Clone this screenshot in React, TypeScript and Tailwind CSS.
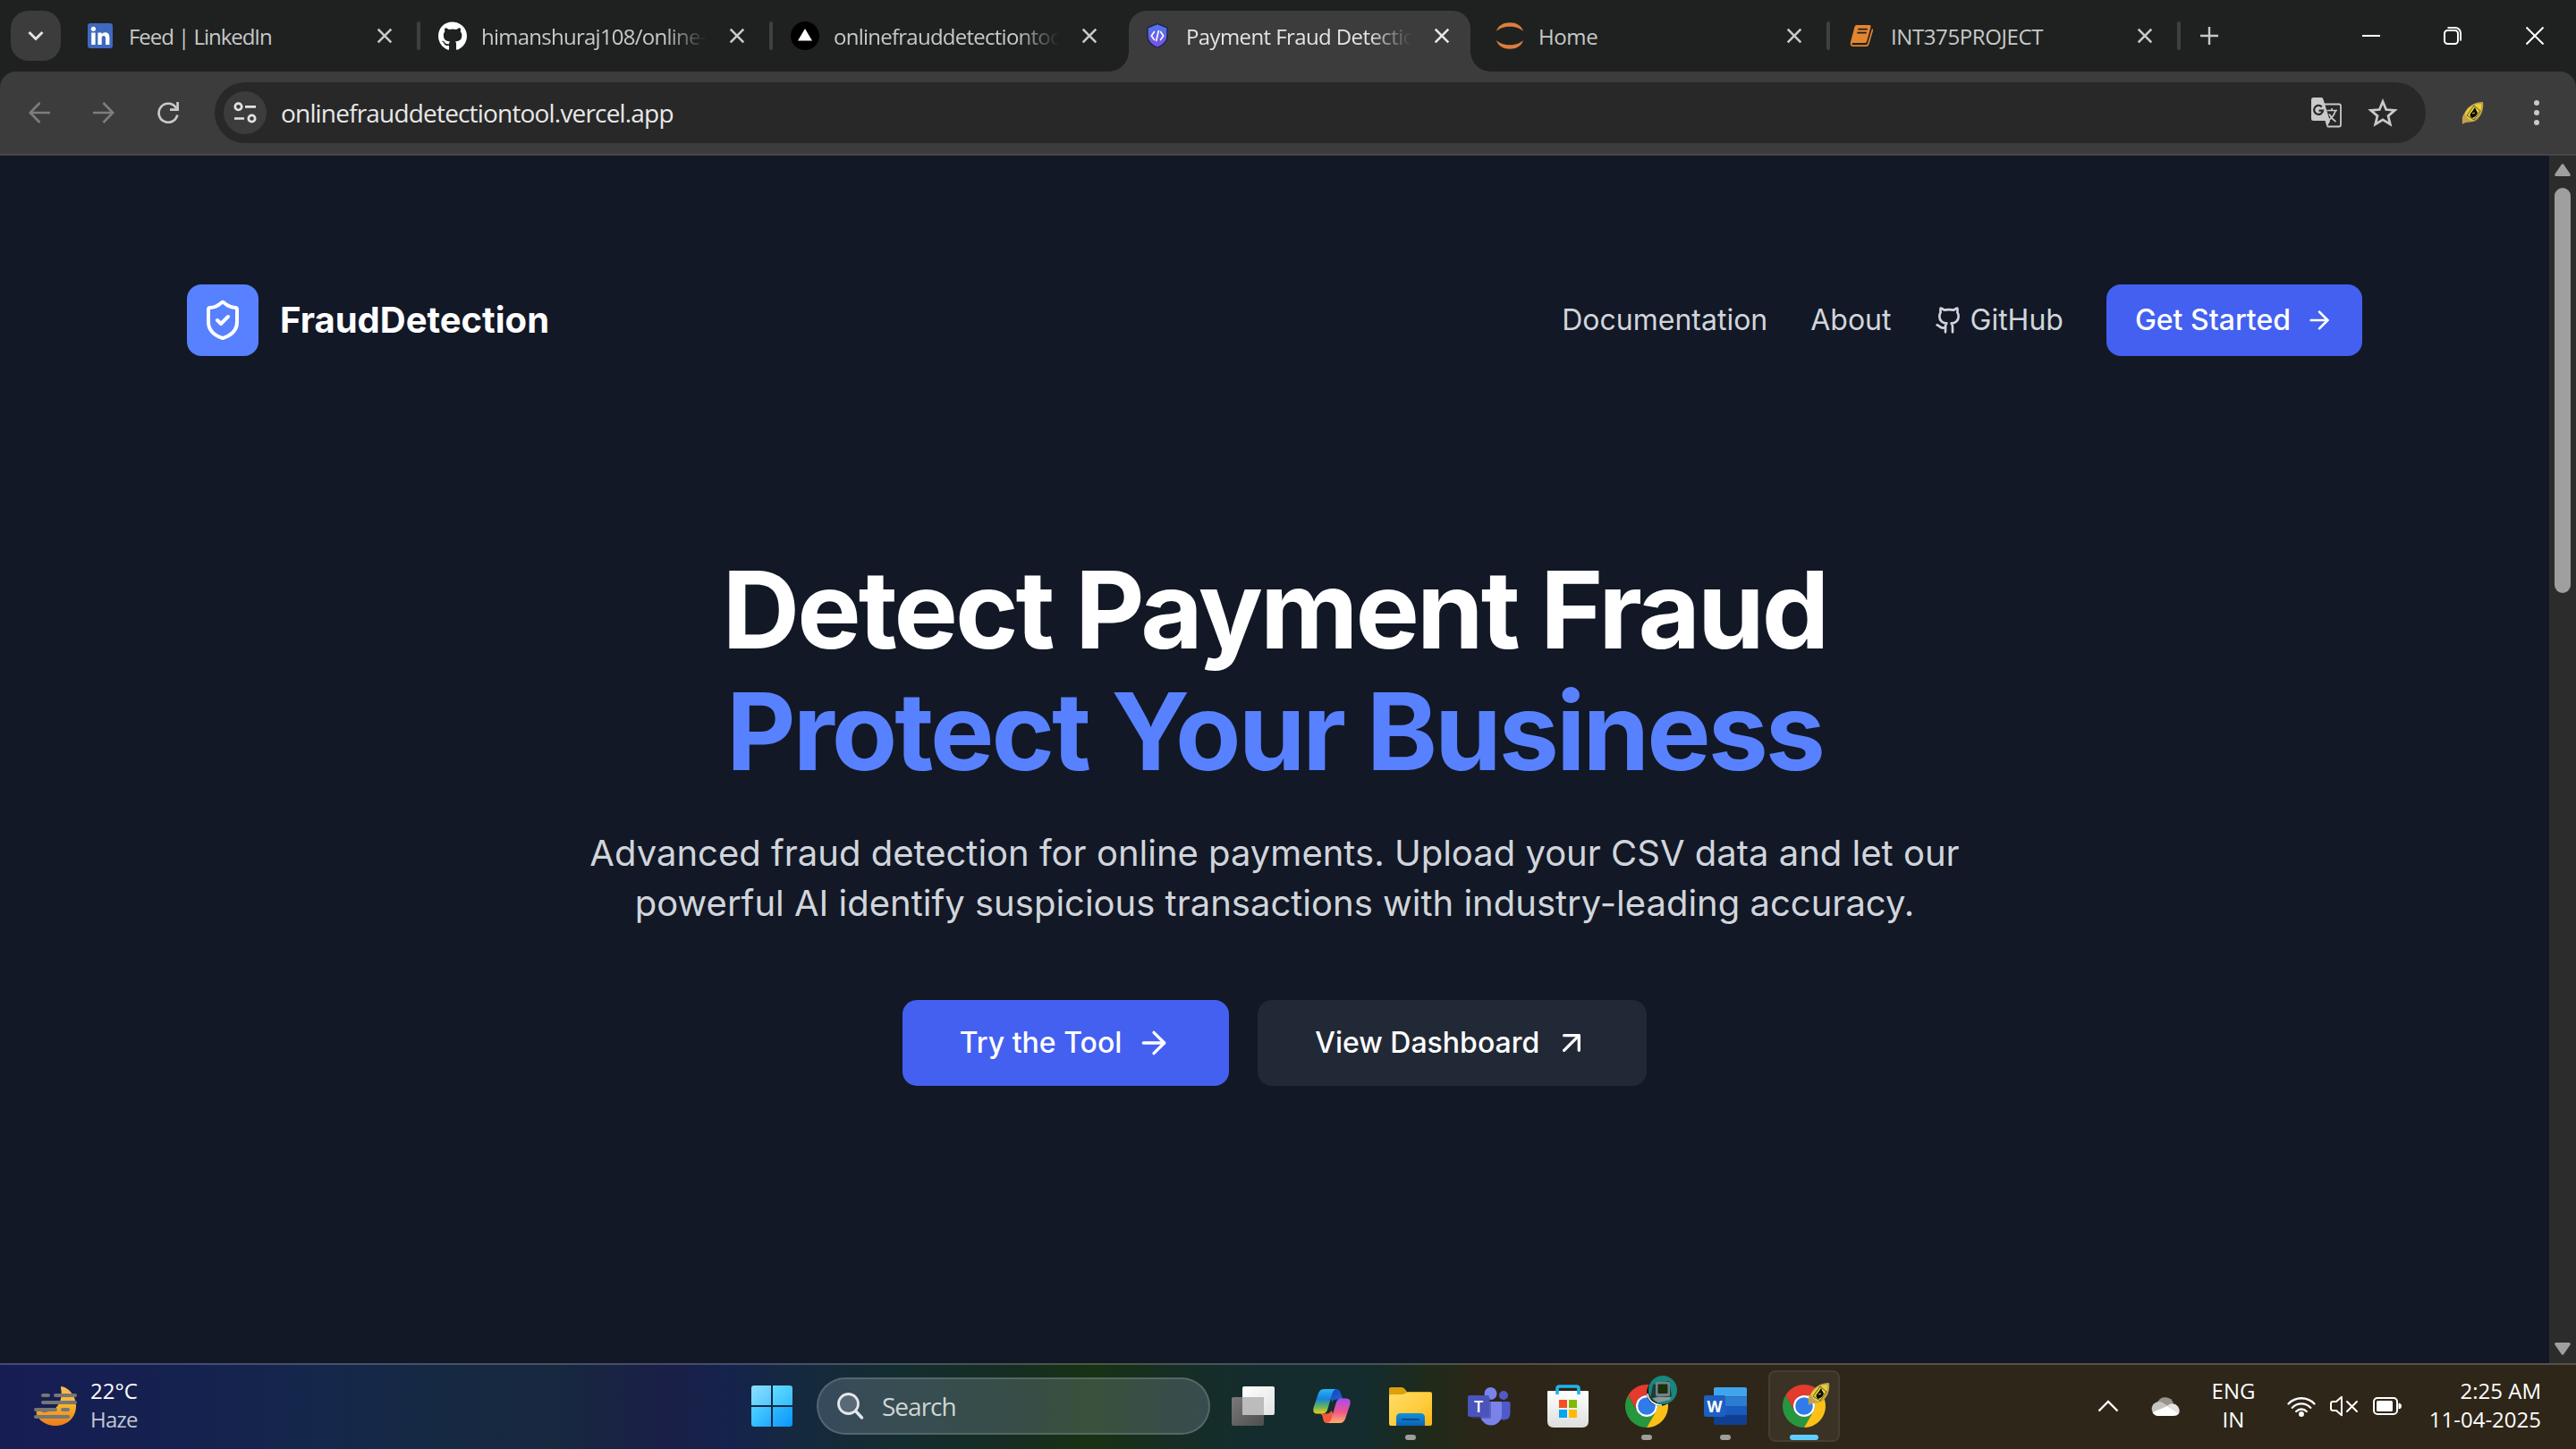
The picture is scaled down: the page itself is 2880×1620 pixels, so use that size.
import React from "react";
import { ArrowRight, ArrowUpRight, Github, ShieldCheck } from "lucide-react";
import { FaGithub } from "react-icons/fa";

/* ---------- favicons ---------- */

function LinkedInIcon() {
  return (
    <span className="flex h-7 w-7 items-end justify-center rounded-[3px] bg-[#3f69be]">
      <svg viewBox="0 0 28 28" className="h-7 w-7" fill="#fff">
        <circle cx="6.4" cy="6.3" r="2.6" />
        <path d="M4.2 10.6h4.4V24H4.2zM11.4 10.6h4.2v1.9c.8-1.4 2.3-2.2 4.1-2.2 3.5 0 4.7 2.2 4.7 5.8V24H20v-7.1c0-1.9-.6-2.9-2-2.9-1.600 0-2.300 1.100-2.300 3V24h-4.300z" />
      </svg>
    </span>
  );
}

function VercelIcon() {
  return (
    <svg viewBox="0 0 32 32" className="h-8 w-8">
      <circle cx="16" cy="16" r="16" fill="#000" />
      <path d="M16 8l8 13.500H8z" fill="#fff" />
    </svg>
  );
}

function ShieldCodeIcon() {
  return (
    <svg viewBox="0 0 32 32" className="h-8 w-8">
      <defs>
        <linearGradient id="shieldFill" x1="0" y1="0" x2="0" y2="1">
          <stop offset="0" stopColor="#4f78ee" />
          <stop offset="1" stopColor="#7c4fe6" />
        </linearGradient>
      </defs>
      <path d="M16 2.600L27 7v9.500c0 6-4.500 10.200-11 12.900C9.500 26.700 5 22.500 5 16.500V7z" fill="url(#shieldFill)" stroke="#1f2647" strokeWidth="1.400" />
      <path d="M12.500 11.500L9.300 16l3.200 4.500M19.500 11.500l3.200 4.500-3.200 4.500M17.300 10.500l-2.600 11" fill="none" stroke="#fff" strokeWidth="1.600" strokeLinecap="round" />
    </svg>
  );
}

function JupyterIcon() {
  return (
    <svg viewBox="0 0 32 32" className="h-8 w-8" fill="#dd7d3f">
      <path d="M1 11C4-2 28-2 31 11 24 4 8 4 1 11z" />
      <path d="M1 21c3 13 27 13 30 0-7 7-23 7-30 0z" />
    </svg>
  );
}

function BookIcon() {
  return (
    <svg viewBox="0 0 32 32" className="h-8 w-8">
      <path d="M9.500 4H24q2 0 1.600 2L21 22.500q-.5 1.500-2 1.500H5q-1.500 2 .5 2.200H20q1.500 0 2-1.500L27 8q1.500.6 1 2.500l-4.500 15q-.8 2.500-3 2.500H6q-4-.2-3.200-4.500L7.500 6q.6-2 2-2z" fill="#e6852f" />
      <path d="M11.300 8.700h10.500M10.300 12.700h10.500" stroke="#1f2120" strokeWidth="1.800" />
    </svg>
  );
}

/* ---------- tab strip ---------- */

function CloseGlyph({ bright }: { bright?: boolean }) {
  return (
    <svg viewBox="0 0 32 32" className={bright ? "h-8 w-8 text-[#e8e8e8]" : "h-8 w-8 text-[#c9cbca]"}>
      <path d="M8.700 8.700l14.600 14.600M23.300 8.700L8.700 23.300" stroke="currentColor" strokeWidth="2.600" />
    </svg>
  );
}

type TabInfo = { title: string; icon: React.ReactNode; fade?: boolean; active?: boolean; divider: boolean; tracking: string };

const tabs: TabInfo[] = [
  { title: "Feed | LinkedIn", icon: <LinkedInIcon />, divider: true, tracking: "tracking-[-1.03px]" },
  { title: "himanshuraj108/online-", icon: <FaGithub className="h-[33px] w-8 text-white" />, fade: true, divider: true, tracking: "tracking-[-0.75px]" },
  { title: "onlinefrauddetectiontool", icon: <VercelIcon />, fade: true, divider: false, tracking: "tracking-[-0.75px]" },
  { title: "Payment Fraud Detection", icon: <ShieldCodeIcon />, fade: true, active: true, divider: false, tracking: "tracking-[-0.6px]" },
  { title: "Home", icon: <JupyterIcon />, divider: true, tracking: "tracking-[-0.4px]" },
  { title: "INT375PROJECT", icon: <BookIcon />, divider: true, tracking: "tracking-[-0.4px]" },
];

function Tab({ tab, last }: { tab: TabInfo; last: boolean }) {
  return (
    <div className={last ? "relative flex h-20 w-[392px] shrink-0 items-center pl-[23px]" : "relative flex h-20 w-[394px] shrink-0 items-center pl-[23px]"}>
      {tab.active && (
        <>
          <span className="absolute top-3 bottom-0 left-[7px] w-[382px] rounded-t-[20px] bg-[#3c3c3c]" />
          <span className="absolute bottom-0 left-[-15px] h-[22px] w-[22px] bg-[radial-gradient(circle_at_0_0,transparent_21.500px,#3c3c3c_22px)]" />
          <span className="absolute right-[-17px] bottom-0 h-[22px] w-[22px] bg-[radial-gradient(circle_at_100%_0,transparent_21.500px,#3c3c3c_22px)]" />
        </>
      )}
      <span className="relative flex h-8 w-8 items-center justify-center">{tab.icon}</span>
      <span
        className={[
          "relative ml-4 overflow-hidden pt-0.5 text-2xl leading-8 whitespace-nowrap",
          last ? "w-[250px]" : "w-[252px]",
          tab.tracking,
          tab.active ? "text-[#e3e3e3]" : "text-[#c7c9c8]",
          tab.fade ? "[mask-image:linear-gradient(to_right,#000_205px,transparent_252px)]" : "",
        ].join(" ")}
      >
        {tab.title}
      </span>
      <span className="relative ml-[18px]">
        <CloseGlyph bright={tab.active} />
      </span>
      {tab.divider && <span className="-mr-[3px] ml-auto h-8 w-1 rounded-sm bg-[#3f4140]" />}
    </div>
  );
}

function TabStrip() {
  return (
    <div className="flex h-20 bg-[#1f2120]">
      <div className="w-[73px] shrink-0 pt-3 pl-3">
        <div className="flex h-14 w-14 items-center justify-center rounded-[20px] bg-[#3c3c3c]">
          <svg viewBox="0 0 20 20" className="h-5 w-5" fill="none" stroke="#e3e3e3" strokeWidth="3">
            <path d="M2.500 6l7.500 7.500L17.500 6" />
          </svg>
        </div>
      </div>
      {tabs.map((t, i) => (
        <Tab key={t.title} tab={t} last={i === tabs.length - 1} />
      ))}
      <div className="flex w-[70px] items-center justify-center">
        <svg viewBox="0 0 20 20" className="h-5 w-5" stroke="#c7c9c8" strokeWidth="2.400">
          <path d="M10 0v20M0 10h20" />
        </svg>
      </div>
      <div className="ml-auto flex items-center">
        <div className="flex w-[91px] justify-center">
          <svg viewBox="0 0 20 20" className="h-5 w-5" stroke="#fff" strokeWidth="2">
            <path d="M0 10h20" />
          </svg>
        </div>
        <div className="flex w-[92px] justify-center">
          <svg viewBox="0 0 22 22" className="h-[22px] w-[22px]" fill="none" stroke="#fff" strokeWidth="2">
            <rect x="2" y="5" width="15" height="15" rx="3.500" />
            <path d="M5.500 2H14a6 6 0 0 1 6 6v8.500" />
          </svg>
        </div>
        <div className="flex w-[92px] justify-center">
          <svg viewBox="0 0 20 20" className="h-5 w-5" stroke="#fff" strokeWidth="2">
            <path d="M.5.5l19 19M19.500.5l-19 19" />
          </svg>
        </div>
      </div>
    </div>
  );
}

/* ---------- address bar ---------- */

function TranslateIcon() {
  return (
    <svg viewBox="0 0 36 36" className="h-9 w-9">
      <path d="M14 8.500h18q2 0 2 2V31.500q0 2-2 2H19" fill="none" stroke="#c9c9c9" strokeWidth="1.800" />
      <path d="M3.500 1H12.500q1.300 0 1.800 1.500L22 27.500l-3.500 6.500L16.500 27H3.500q-2.500 0-2.500-2.500V3.500Q1 1 3.500 1z" fill="#c9c9c9" />
      <path d="M12.800 11.500a5 5 0 1 0 1.300 4.200H9.500" fill="none" stroke="#282828" strokeWidth="2.200" />
      <path d="M18.500 15.500H30M24 13v2.500M28 16c-1.500 5-4.500 8.500-8.500 11M21 19.500c2 4 4.500 6.500 7.500 8.500" fill="none" stroke="#c9c9c9" strokeWidth="1.700" />
    </svg>
  );
}

function LeafAvatar({ className }: { className: string }) {
  return (
    <svg viewBox="0 0 28 28" className={className}>
      <path d="M26 2c1 7-1 15-7 20-5 4-11 1-16 5 0-5-1-8 2-12C8 8 15 2 26 2z" fill="#c2a24a" />
      <path d="M24 4c1 8-3 15-10 19-4-1-8-5-8-8C9 8 16 4 24 4z" fill="#e6cf3e" />
      <path d="M16 6l7 6-7 10-8-5z" fill="none" stroke="#5d531b" strokeWidth="1" />
      <path d="M17 8c1 2 1 3 3 6-1 3-3 5-6 6-2-1-3-3-2-5 2-2 3-4 5-7z" fill="#0b0b07" />
      <path d="M14 15l3-1" stroke="#e6cf3e" strokeWidth="1" />
    </svg>
  );
}

function Toolbar() {
  return (
    <div className="bg-[#1f2120]">
      <div className="flex h-[94px] items-center rounded-t-[18px] border-b-2 border-[#444746] bg-[#3c3c3c] px-2">
        <div className="flex w-[72px] justify-center">
          <svg viewBox="0 0 24 24" className="h-6 w-6" fill="none" stroke="#7d7d7d" strokeWidth="2.600">
            <path d="M24 12H2M12.500 1L1.700 12l10.800 11" />
          </svg>
        </div>
        <div className="flex w-[72px] justify-center">
          <svg viewBox="0 0 24 24" className="h-6 w-6" fill="none" stroke="#7d7d7d" strokeWidth="2.600">
            <path d="M0 12h22M11.500 1l10.800 11-10.800 11" />
          </svg>
        </div>
        <div className="flex w-[72px] justify-center">
          <svg viewBox="0 0 24 24" className="h-6 w-6" fill="none" stroke="#c9c9c9" strokeWidth="2.700">
            <path d="M22.300 14.500A10.500 10.500 0 1 1 20.500 6L22.500 8.500" />
            <path d="M22.600 0v8.700H14" />
          </svg>
        </div>
        <div className="ml-4 flex h-[68px] flex-1 items-center rounded-full bg-[#282828] pr-[31px] pl-[10px]">
          <div className="flex h-12 w-12 items-center justify-center rounded-full bg-[#3c3c3c]">
            <svg viewBox="0 0 26 26" className="h-[26px] w-[26px]" fill="none" stroke="#e3e3e3" strokeWidth="2.700">
              <circle cx="5.500" cy="6.300" r="3.700" />
              <path d="M13 6.300h12M1 19.500h11" />
              <circle cx="20.500" cy="19.500" r="3.700" />
            </svg>
          </div>
          <span className="ml-4 text-[28px] leading-10 tracking-[-0.82px] text-[#e8e8e8]">onlinefrauddetectiontool.vercel.app</span>
          <span className="ml-auto">
            <TranslateIcon />
          </span>
          <svg viewBox="0 0 34 32" className="ml-[28px] h-8 w-[34px]" fill="none" stroke="#c9c9c9" strokeWidth="2.700">
            <path d="M17 3.500l3.700 9 9.700.8-7.400 6.300 2.300 9.400-8.300-5.100-8.300 5.100 2.300-9.400-7.400-6.300 9.700-.8z" />
          </svg>
        </div>
        <div className="ml-4 flex w-[72px] justify-center">
          <LeafAvatar className="h-7 w-7" />
        </div>
        <div className="flex w-[72px] flex-col items-center gap-[5px]">
          <span className="h-1.5 w-1.5 rounded-full bg-[#c9c9c9]" />
          <span className="h-1.5 w-1.5 rounded-full bg-[#c9c9c9]" />
          <span className="h-1.5 w-1.5 rounded-full bg-[#c9c9c9]" />
        </div>
      </div>
    </div>
  );
}

/* ---------- web page ---------- */

function SiteNav() {
  return (
    <nav className="flex h-20 items-center text-[32px] leading-none">
      <div className="flex h-20 w-20 items-center justify-center rounded-2xl bg-[#5881ff]">
        <ShieldCheck className="h-12 w-12 text-white" strokeWidth={2} />
      </div>
      <span className="ml-6 text-[40px] font-bold text-white">FraudDetection</span>
      <div className="ml-auto flex items-center gap-12 text-[#d1d5db]">
        <a>Documentation</a>
        <a>About</a>
        <a className="flex items-center gap-2">
          <Github className="h-8 w-8" strokeWidth={2} />
          GitHub
        </a>
        <a className="flex h-20 items-center gap-4 rounded-2xl bg-[#4360f1] px-8 font-medium text-white">
          Get Started
          <ArrowRight className="h-8 w-8" strokeWidth={2} />
        </a>
      </div>
    </nav>
  );
}

function Hero() {
  return (
    <section className="mt-[216px] flex flex-col items-center text-center">
      <h1 className="text-[120px] leading-[136px] font-bold tracking-[-3px] text-white">
        Detect Payment Fraud
        <span className="block text-[#5881ff]">Protect Your Business</span>
      </h1>
      <p className="mt-10 text-[40px] leading-[56px] text-[#d1d5db]">
        Advanced fraud detection for online payments. Upload your CSV data and let our
        <br />
        powerful AI identify suspicious transactions with industry-leading accuracy.
      </p>
      <div className="mt-20 flex gap-8 text-[32px] font-medium text-white">
        <a className="flex h-24 items-center gap-4 rounded-2xl bg-[#4360f1] px-16">
          Try the Tool
          <ArrowRight className="h-10 w-10" strokeWidth={2} />
        </a>
        <a className="flex h-24 items-center gap-4 rounded-2xl bg-[#222936] px-16">
          View Dashboard
          <ArrowUpRight className="h-10 w-10" strokeWidth={2} />
        </a>
      </div>
    </section>
  );
}

function Scrollbar() {
  return (
    <div className="flex w-[30px] flex-col items-center bg-[#2c2c2c] pt-[9px] pb-[9px]">
      <svg viewBox="0 0 18 14" className="h-[14px] w-[18px]" fill="#9f9f9f">
        <path d="M7.500 1.300Q9-.8 10.500 1.300L17.500 11.500Q18.500 14 16 14H2Q-.5 14 .5 11.500z" />
      </svg>
      <div className="mt-[13px] h-[453px] w-[18px] rounded-full bg-[#9f9f9f]" />
      <svg viewBox="0 0 18 14" className="mt-auto h-[14px] w-[18px] rotate-180" fill="#9f9f9f">
        <path d="M7.500 1.300Q9-.8 10.500 1.300L17.500 11.500Q18.500 14 16 14H2Q-.5 14 .5 11.500z" />
      </svg>
    </div>
  );
}

/* ---------- taskbar ---------- */

function HazeIcon() {
  return (
    <svg viewBox="0 0 50 46" className="h-[46px] w-[50px]">
      <defs>
        <linearGradient id="moon" x1="0" y1="0" x2="0" y2="1">
          <stop offset="0" stopColor="#f7b955" />
          <stop offset=".45" stopColor="#f6b92c" />
          <stop offset="1" stopColor="#ee7a1b" />
        </linearGradient>
      </defs>
      <path d="M31 1q-1.300 0-1 2c3 13-4 27-18 26.500-4 0-7-2-9-.5-2 5 7 16 21 16 14 0 23-10 23-22C47 12 40 3 31 1z" fill="url(#moon)" />
      <g fill="#767676">
        <rect x="8" y="9" width="10" height="4" rx="2" />
        <rect x="22" y="9" width="26" height="4" rx="2" />
        <rect x="8" y="17" width="40" height="4" rx="2" />
        <rect x="0" y="25" width="26" height="4" rx="2" />
        <rect x="30" y="25" width="10" height="4" rx="2" />
        <rect x="0" y="33" width="40" height="4" rx="2" />
      </g>
    </svg>
  );
}

function StartIcon() {
  return (
    <div className="grid h-[46px] w-[46px] grid-cols-2 gap-[2px]">
      <span className="rounded-tl-[3px] bg-linear-to-br from-[#8be0ff] to-[#52c6ff]" />
      <span className="rounded-tr-[3px] bg-linear-to-br from-[#62dcff] to-[#33bbff]" />
      <span className="rounded-bl-[3px] bg-linear-to-br from-[#4fd2ff] to-[#1fa9fd]" />
      <span className="rounded-br-[3px] bg-linear-to-br from-[#30b9ff] to-[#0797fb]" />
    </div>
  );
}

function TaskViewIcon() {
  return (
    <svg viewBox="0 0 48 44" className="h-11 w-12">
      <defs>
        <linearGradient id="tvDark" x1="0" y1="0" x2="1" y2="1">
          <stop offset="0" stopColor="#7a7a7a" />
          <stop offset="1" stopColor="#4e4e4e" />
        </linearGradient>
        <linearGradient id="tvLight" x1="0" y1="0" x2="1" y2="1">
          <stop offset="0" stopColor="#fff" />
          <stop offset="1" stopColor="#e2e2e2" />
        </linearGradient>
      </defs>
      <rect x="12" y="0" width="36" height="32" rx="2" fill="url(#tvLight)" />
      <rect x="0" y="12" width="36" height="32" rx="2" fill="url(#tvDark)" />
      <rect x="12" y="12" width="24" height="20" fill="#bcbcbc" />
    </svg>
  );
}

function CopilotIcon() {
  return (
    <svg viewBox="0 0 46 42" className="h-10 w-11">
      <defs>
        <linearGradient id="cpA" x1="0" y1="0" x2="0" y2="1">
          <stop offset="0" stopColor="#2bb3f5" />
          <stop offset=".4" stopColor="#1583dc" />
          <stop offset=".72" stopColor="#67b45a" />
          <stop offset="1" stopColor="#f2cb1c" />
        </linearGradient>
        <linearGradient id="cpB" x1="0" y1="0" x2="0" y2="1">
          <stop offset="0" stopColor="#a44df0" />
          <stop offset=".55" stopColor="#f0568c" />
          <stop offset="1" stopColor="#fdb068" />
        </linearGradient>
        <linearGradient id="cpC" x1="0" y1="0" x2="1" y2="1">
          <stop offset="0" stopColor="#1140b4" />
          <stop offset="1" stopColor="#1f6ae0" />
        </linearGradient>
      </defs>
      <path d="M16 1H28q4 0 5 3.500l1.500 5Q35.500 13 39 13H28q-3 0-4.500 3z" fill="url(#cpC)" />
      <path d="M30 41H18q-4 0-5-3.500l-1-4.500Q11 30 8 30H17q4 0 5.500-4z" fill="#f25a3c" />
      <path d="M14 1H29q-4 0-5.500 5L18 25q-1.500 5-6 5H6q-6 0-4.500-7L7 6.500Q8.800 1 14 1z" fill="url(#cpA)" />
      <path d="M32 41H17q4 0 5.500-5L28 17q1.500-5 6-5h6q6 0 4.500 7L39 35.500Q37.200 41 32 41z" fill="url(#cpB)" />
    </svg>
  );
}

function ExplorerIcon() {
  return (
    <svg viewBox="0 0 48 43" className="h-[43px] w-12">
      <defs>
        <linearGradient id="exY" x1="0" y1="0" x2="1" y2="1">
          <stop offset="0" stopColor="#ffdd6b" />
          <stop offset=".6" stopColor="#ffcb39" />
          <stop offset="1" stopColor="#f6b318" />
        </linearGradient>
        <linearGradient id="exB" x1="0" y1="0" x2="0" y2="1">
          <stop offset="0" stopColor="#1590dc" />
          <stop offset="1" stopColor="#0a62b4" />
        </linearGradient>
      </defs>
      <path d="M2 0H14q2 0 3.500 1.800L20 5H46q2 0 2 2v6H0V2Q0 0 2 0z" fill="#dd9f0a" />
      <path d="M0 9.500Q0 8 2 8h12q2 0 3.500-1T21 5.800H46q2 0 2 2V41q0 2-2 2H2q-2 0-2-2z" fill="url(#exY)" />
      <path d="M8 43V34q0-5 5-5H35q5 0 5 5v9z" fill="url(#exB)" />
      <path d="M15 36H33" stroke="#0a4c8e" strokeWidth="2" strokeLinecap="round" />
    </svg>
  );
}

function TeamsIcon() {
  return (
    <svg viewBox="0 0 48 44" className="h-11 w-12">
      <circle cx="40" cy="10" r="5" fill="#5059c9" />
      <path d="M34 17H46q1.500 0 1.500 1.500V29.500q0 8-7.500 8-4 0-6-2z" fill="#5059c9" />
      <circle cx="25.500" cy="8" r="7" fill="#7b83eb" />
      <path d="M14 17H36q2 0 2 2V31a12 12 0 0 1-24 1z" fill="#7b83eb" />
      <rect x="4" y="13" width="22" height="23" rx="2" fill="#3c3f8e" opacity=".5" />
      <rect x="0" y="10" width="24" height="24" rx="2" fill="#4b53bc" />
      <text x="12" y="28.500" textAnchor="middle" fontFamily="Open Sans" fontWeight="600" fontSize="18" fill="#fff">
        T
      </text>
    </svg>
  );
}

function StoreIcon() {
  return (
    <svg viewBox="0 0 46 48" className="h-12 w-[46px]">
      <defs>
        <linearGradient id="stW" x1="0" y1="0" x2="0" y2="1">
          <stop offset="0" stopColor="#fff" />
          <stop offset="1" stopColor="#dedede" />
        </linearGradient>
      </defs>
      <path d="M1 7H45q1 0 1 1V41q0 7-7 7H7q-7 0-7-7V8q0-1 1-1z" fill="url(#stW)" />
      <path d="M11 11V4.500Q11 2 13.500 2h19Q35 2 35 4.500V11" fill="none" stroke="#1fb4ea" strokeWidth="3.600" />
      <rect x="13" y="17" width="9" height="9" fill="#f25022" />
      <rect x="24" y="17" width="9" height="9" fill="#7fba00" />
      <rect x="13" y="28" width="9" height="9" fill="#00a4ef" />
      <rect x="24" y="28" width="9" height="9" fill="#ffb900" />
    </svg>
  );
}

function ChromeIcon() {
  return (
    <svg viewBox="0 0 48 48" className="h-12 w-12">
      <path d="M3.220 12A24 24 0 0 1 44.780 12H24A12 12 0 0 0 13.600 30z" fill="#e33b2e" />
      <path d="M3.220 12L13.600 30A12 12 0 0 0 34.400 30L24 48A24 24 0 0 1 3.220 12z" fill="#27973f" />
      <path d="M44.780 12A24 24 0 0 1 24 48L34.400 30A12 12 0 0 0 24 12z" fill="#fbc116" />
      <circle cx="24" cy="24" r="12" fill="#fff" />
      <circle cx="24" cy="24" r="9.800" fill="#2f7bea" />
    </svg>
  );
}

function RetroBadge() {
  return (
    <svg viewBox="0 0 36 36" className="h-9 w-9">
      <circle cx="16" cy="19" r="15" fill="#0c0c0c" />
      <path d="M2 20a15 15 0 0 0 16 13" fill="none" stroke="#fff" strokeWidth="1.500" />
      <circle cx="19" cy="16" r="16" fill="#17877f" />
      <path d="M8 10l18-4 3 17-15 6-9-3z" fill="#1c3b3c" />
      <rect x="11" y="7" width="16" height="16" rx="1.500" fill="#75808a" />
      <rect x="13.500" y="9.500" width="11" height="10.500" rx="1" fill="#173109" />
      <path d="M7 25.500l7-2 14 .5-1 3-13 3z" fill="#8d979a" />
    </svg>
  );
}

function WordIcon() {
  return (
    <svg viewBox="0 0 48 42" className="h-[42px] w-12">
      <path d="M13 0H46q2 0 2 2V10.500H11V2q0-2 2-2z" fill="#41a5ee" />
      <path d="M11 10.500H48V21H11z" fill="#2b7cd3" />
      <path d="M11 21H48V31.500H11z" fill="#185abd" />
      <path d="M11 31.500H48V40q0 2-2 2H13q-2 0-2-2z" fill="#103f91" />
      <rect x="0" y="9" width="24" height="24" rx="2" fill="#1d5fc2" />
      <text x="12" y="27.500" textAnchor="middle" fontFamily="Open Sans" fontWeight="700" fontSize="17.500" fill="#fff">
        W
      </text>
    </svg>
  );
}

function TaskItem({ children, running, active }: { children: React.ReactNode; running?: boolean; active?: boolean }) {
  return (
    <div className="flex w-[88px] justify-center">
      <div
        className={
          active
            ? "relative flex h-20 w-20 items-center justify-center rounded-lg border-2 border-white/[0.06] bg-white/[0.06]"
            : "relative flex h-20 w-20 items-center justify-center"
        }
      >
        {children}
        {running && <span className="absolute bottom-[2px] h-[6px] w-3 rounded-full bg-[#a09e9a]" />}
        {active && <span className="absolute bottom-0 h-[6px] w-8 rounded-full bg-[#60cdff]" />}
      </div>
    </div>
  );
}

function Tray() {
  return (
    <div className="ml-auto flex h-20 items-center pr-[39px] text-2xl leading-8 text-white">
      <svg viewBox="0 0 24 14" className="h-[14px] w-6" fill="none" stroke="#fff" strokeWidth="2.400">
        <path d="M1.500 12.500L12 2l10.500 10.500" />
      </svg>
      <svg viewBox="0 0 32 22" className="ml-[36px] h-[22px] w-8">
        <path d="M7 7a9.500 9.500 0 0 1 18 1.500l-9 4z" fill="#98938b" />
        <path d="M8 22a8 8 0 1 1 4.500-15L24 14z" fill="#c6c4c0" />
        <path d="M18 10.500Q25 5.500 30 11.500q3.500 5.500 0 9z" fill="#e4e3e1" />
        <path d="M1.500 18L18 11l12.500 8.500Q29 22 25 22H8Q3.500 22 1.500 18z" fill="#fff" />
      </svg>
      <div className="ml-[30px] w-[60px] pb-0.5 text-center">
        <div>ENG</div>
        <div>IN</div>
      </div>
      <svg viewBox="0 0 32 24" className="ml-[30px] h-6 w-8" fill="none" stroke="#fff" strokeWidth="2.300" strokeLinecap="round">
        <path d="M1.500 9.500a20 20 0 0 1 29 0M5.800 13.800a14 14 0 0 1 20.400 0M10.200 18a8 8 0 0 1 11.600 0" />
        <circle cx="16" cy="21" r="1.800" fill="#fff" />
      </svg>
      <svg viewBox="0 0 32 24" className="ml-4 h-6 w-8" fill="none" stroke="#fff" strokeWidth="2" strokeLinejoin="round">
        <path d="M13 1.800v20.400L7 17H3.500Q1 17 1 15V9q0-2 2.500-2H7z" />
        <path d="M19 7l11 11M30 7L19 18" strokeLinecap="round" />
      </svg>
      <svg viewBox="0 0 32 20" className="ml-4 h-5 w-8">
        <rect x="1" y="1" width="26" height="18" rx="4" fill="none" stroke="#fff" strokeWidth="2" />
        <rect x="4" y="4" width="18" height="12" rx="1.500" fill="#fff" />
        <path d="M28.500 6.500Q32 7 32 10t-3.500 3.500z" fill="#fff" />
      </svg>
      <div className="w-[156px] pb-0.5 text-right">
        <div>2:25 AM</div>
        <div>11-04-2025</div>
      </div>
    </div>
  );
}

function Taskbar() {
  return (
    <div className="flex h-24 items-center border-t-2 border-white/20 bg-[linear-gradient(to_right,#161d54_0px,#15214f_200px,#15274b_360px,#162942_500px,#17283f_620px,#1a1f47_740px,#15234c_820px,#152840_880px,#142d30_1000px,#152d22_1130px,#183214_1220px,#162e24_1310px,#142c2e_1400px,#142c2d_1530px,#202a19_1600px,#2c2618_1660px,#2e2618_1760px,#2e2618_2880px)] bg-origin-border pb-0.5">
      <div className="flex w-[840px] items-center pl-[38px]">
        <HazeIcon />
        <div className="ml-[13px] pb-0.5 text-2xl leading-8">
          <div className="text-white">22°C</div>
          <div className="tracking-[-0.8px] text-[#c3c7d4]">Haze</div>
        </div>
      </div>
      <StartIcon />
      <div className="ml-[27px] flex h-16 w-[440px] items-center rounded-full border-2 border-white/15 bg-[#c4cce0]/20 pl-[21px]">
        <svg viewBox="0 0 30 30" className="h-[30px] w-[30px]" fill="none" stroke="#e4e7ec" strokeLinecap="round">
          <circle cx="12.500" cy="12.500" r="11" strokeWidth="2.800" fill="#8b97a8" fillOpacity=".4" />
          <path d="M21 21l6.500 7" strokeWidth="3.400" />
        </svg>
        <span className="ml-[20px] text-[28px] leading-9 tracking-[-1px] text-[#d0d5d4]">Search</span>
      </div>
      <div className="ml-1 flex">
        <TaskItem><TaskViewIcon /></TaskItem>
        <TaskItem><CopilotIcon /></TaskItem>
        <TaskItem running><ExplorerIcon /></TaskItem>
        <TaskItem><TeamsIcon /></TaskItem>
        <TaskItem><StoreIcon /></TaskItem>
        <TaskItem running>
          <ChromeIcon />
          <span className="absolute top-[6px] left-[39px]"><RetroBadge /></span>
        </TaskItem>
        <TaskItem running><WordIcon /></TaskItem>
        <TaskItem active>
          <ChromeIcon />
          <span className="absolute top-[10px] left-[40px]"><LeafAvatar className="h-7 w-7" /></span>
        </TaskItem>
      </div>
      <Tray />
    </div>
  );
}

export default function App() {
  return (
    <div className="flex h-[1620px] w-[2880px] flex-col overflow-hidden bg-[#121826] font-['Open_Sans',sans-serif]">
      <TabStrip />
      <Toolbar />
      <div className="flex h-[1350px]">
        <main className="flex-1 bg-[#121826] px-[209px] pt-36 font-['Inter',sans-serif]">
          <SiteNav />
          <Hero />
        </main>
        <Scrollbar />
      </div>
      <Taskbar />
    </div>
  );
}
